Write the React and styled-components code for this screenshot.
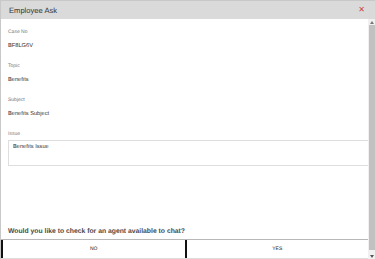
import React from "react";
import styled, { createGlobalStyle } from "styled-components";

const Global = createGlobalStyle`
  html, body { margin: 0; padding: 0; background: #fff; }
  body {
    font-family: "Liberation Sans", Arial, sans-serif;
    text-rendering: geometricPrecision;
    -webkit-font-smoothing: antialiased;
  }
`;

const Dialog = styled.div`
  width: 375px;
  height: 259px;
  display: flex;
  flex-direction: column;
  box-sizing: border-box;
  overflow: hidden;
`;

const Header = styled.div`
  height: 19px;
  flex: none;
  background: #dadada;
  border-top: 1px solid #c8c8c8;
  border-left: 1px solid #c8c8c8;
  box-sizing: border-box;
  display: flex;
  align-items: center;
  justify-content: space-between;
  padding: 0 10px 0 8px;
`;

const Title = styled.div`
  font-size: 7.6px;
  color: #333;
`;

const Close = styled.div`
  color: #d04545;
  font-size: 8px;
  line-height: 1;
`;

const Main = styled.div`
  flex: 1;
  display: flex;
  min-height: 0;
  border-left: 1px solid #c8c8c8;
`;

const Content = styled.div`
  flex: 1;
  display: flex;
  flex-direction: column;
  min-width: 0;
`;

const Fields = styled.div`
  flex: 1;
  padding: 10px 0 0 7px;
`;

const Field = styled.div`
  height: 34px;
`;

const Label = styled.div`
  font-size: 5px;
  color: #777;
  height: 10px;
  line-height: 6px;
`;

const Value = styled.div`
  font-size: 5.7px;
  color: #333;
  line-height: 8px;
  margin-top: 3px;
`;

const TextBox = styled.div`
  margin-top: -1px;
  height: 26px;
  border: 1px solid #dedede;
  border-right: none;
  box-sizing: border-box;
  padding: 3px 4px;
  font-size: 5.7px;
  color: #333;
`;

const Question = styled.div`
  font-size: 6.8px;
  font-weight: bold;
  color: #4a4a4a;
  padding: 0 0 4px 7px;
`;

const Buttons = styled.div`
  display: flex;
  height: 18px;
  border-top: 1px solid #b8b8b8;
  border-bottom: 1px solid #dcdcdc;
`;

const Btn = styled.div`
  flex: 1;
  display: flex;
  align-items: center;
  justify-content: center;
  font-size: 5px;
  color: #222;
  border-left: ${(p) => (p.$first ? "2px solid #111" : "none")};
  border-right: ${(p) => (p.$first ? "2px solid #111" : "none")};
`;

const Scroll = styled.div`
  width: 7px;
  flex: none;
  background: #f1f1f1;
  display: flex;
  flex-direction: column;
  align-items: center;
`;

const Arrow = styled.div`
  height: 6px;
  flex: none;
  display: flex;
  align-items: center;
  justify-content: center;
`;

const Thumb = styled.div`
  flex: 1;
  width: 6px;
  background: #c1c1c1;
  margin: 0 0 3px;
`;

export default function App() {
  return (
    <>
      <Global />
      <Dialog>
        <Header>
          <Title>Employee Ask</Title>
          <Close>✕</Close>
        </Header>
        <Main>
          <Content>
            <Fields>
              <Field>
                <Label>Case No</Label>
                <Value>BF8LG6V</Value>
              </Field>
              <Field>
                <Label>Topic</Label>
                <Value>Benefits</Value>
              </Field>
              <Field>
                <Label>Subject</Label>
                <Value>Benefits Subject</Value>
              </Field>
              <Field>
                <Label>Issue</Label>
                <TextBox>Benefits Issue</TextBox>
              </Field>
            </Fields>
            <Question>Would you like to check for an agent available to chat?</Question>
            <Buttons>
              <Btn $first>NO</Btn>
              <Btn>YES</Btn>
            </Buttons>
          </Content>
          <Scroll>
            <Arrow>
              <svg width="4" height="3" viewBox="0 0 4 3"><path d="M0 3L2 0L4 3Z" fill="#777" /></svg>
            </Arrow>
            <Thumb />
            <Arrow>
              <svg width="4" height="3" viewBox="0 0 4 3"><path d="M0 0L2 3L4 0Z" fill="#555" /></svg>
            </Arrow>
          </Scroll>
        </Main>
      </Dialog>
    </>
  );
}
